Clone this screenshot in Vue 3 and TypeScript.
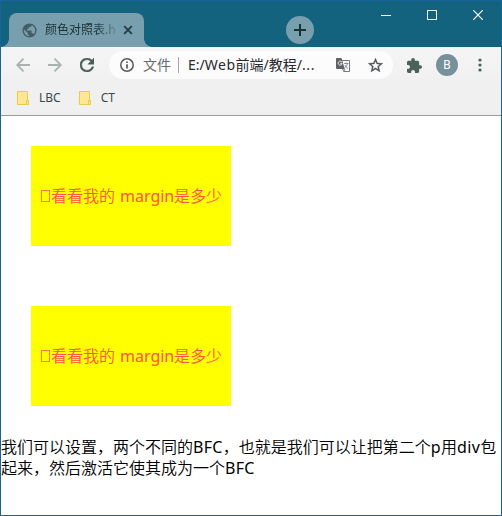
<script setup lang="ts">
interface Bookmark {
  label: string
}

const bookmarks: Bookmark[] = [{ label: 'LBC' }, { label: 'CT' }]
const boxes: number[] = [1, 2]
</script>

<template>
  <div class="window">
    <header class="titlebar">
      <div class="tab">
        <svg class="globe" viewBox="0 0 24 24" width="17" height="17">
          <circle cx="12" cy="12" r="10" fill="#455e64" />
          <path fill="#789fad" d="M4.200 10.500 9.500 15.500v1.500c0 1 .8 1.600 1.500 1.800v1.200C7 19.400 4 16 4 12zM17.900 17.400c-.3-.9-1-1.400-1.900-1.400h-1v-3c0-.6-.4-1-1-1H8.500v-2H10c.6 0 1-.4 1-1V7h2c1.100 0 2-.9 2-2v-.4c2.900 1.200 5 4.100 5 7.400 0 2.100-.8 4-2.100 5.400z" />
        </svg>
        <span class="tab-title">颜色对照表.h</span>
        <svg class="tab-close" viewBox="0 0 10 10" width="10" height="10">
          <path d="M1.200 1.200 8.800 8.800M8.800 1.200 1.200 8.800" stroke="#233f43" stroke-width="1.900" />
        </svg>
      </div>
      <button class="new-tab" aria-label="+">
        <svg viewBox="0 0 12 12" width="12" height="12">
          <path d="M6 0v12M0 6h12" stroke="#18332f" stroke-width="2" />
        </svg>
      </button>
      <div class="controls">
        <svg viewBox="0 0 10 10" width="10" height="10"><path d="M0 5.500h10" stroke="#fff" /></svg>
        <svg viewBox="0 0 10 10" width="10" height="10"><path d="M.5.5h9v9h-9z" fill="none" stroke="#fff" /></svg>
        <svg viewBox="0 0 10 10" width="10" height="10"><path d="M.2.2 9.800 9.800M9.800.2.2 9.800" stroke="#fff" stroke-width="1.200" /></svg>
      </div>
    </header>

    <nav class="toolbar">
      <svg class="back" viewBox="0 0 14 14" width="14" height="14">
        <path d="M14 7H1.500M7.500.7 1.200 7l6.300 6.300" fill="none" stroke="#a9b2b0" stroke-width="1.800" />
      </svg>
      <svg class="forward" viewBox="0 0 14 14" width="14" height="14">
        <path d="M0 7h12.500M6.500.7 12.800 7l-6.300 6.300" fill="none" stroke="#a9b2b0" stroke-width="1.800" />
      </svg>
      <svg class="reload" viewBox="4 4 16 16" width="14" height="14">
        <path fill="#465f58" stroke="#465f58" stroke-width=".5" d="M17.650 6.350C16.200 4.900 14.210 4 12 4c-4.420 0-7.990 3.580-7.990 8s3.570 8 7.990 8c3.730 0 6.840-2.550 7.730-6h-2.080c-.82 2.330-3.040 4-5.650 4-3.310 0-6-2.690-6-6s2.690-6 6-6c1.660 0 3.140.69 4.220 1.780L13 11h7V4l-2.350 2.350z" />
      </svg>
      <div class="omnibox">
        <svg class="info" viewBox="0 0 14 14" width="14" height="14">
          <circle cx="7" cy="7" r="6.200" fill="none" stroke="#57595c" stroke-width="1.500" />
          <path d="M7 6.200v4.300M7 3.400v1.600" stroke="#57595c" stroke-width="1.700" />
        </svg>
        <span class="scheme">文件</span>
        <i class="divider"></i>
        <span class="url">E:/<span class="web">Web</span>前端/教程/<span class="dots">...</span></span>
        <svg class="translate" viewBox="0 0 14 14" width="14" height="14">
          <path d="M6 2.500h7.500v11H7.500" fill="#fafafa" stroke="#77797b" stroke-width="1" />
          <path d="M0 1a1 1 0 0 1 1-1h4.500l3.200 11H1a1 1 0 0 1-1-1z" fill="#5f6163" />
          <path d="M6.200 5.300H4.300M5.900 4A2 2 0 1 0 6.200 5.500" fill="none" stroke="#fff" stroke-width=".9" />
          <path d="M8 5.500h4.500M10.200 4.500v1M11.500 5.500c-.3 2-1.500 3.500-3 4.500M9 7c.5 1.500 1.700 2.600 3 3.500M6.500 11l1.500 2.500 1-2.500z" fill="none" stroke="#77797b" stroke-width=".8" />
        </svg>
        <svg class="star" viewBox="2 2 20 19" width="15" height="14">
          <path fill="#505356" stroke="#505356" stroke-width=".4" d="M22 9.240l-7.190-.62L12 2 9.190 8.630 2 9.240l5.460 4.730L5.820 21 12 17.270 18.180 21l-1.630-7.030L22 9.240zM12 15.400l-3.760 2.270 1-4.280-3.320-2.880 4.380-.38L12 6.100l1.710 4.040 4.380.38-3.320 2.880 1 4.280L12 15.400z" />
        </svg>
      </div>
      <svg class="puzzle" viewBox="2 1 21 21" width="15" height="15">
        <path fill="#4b625b" d="M20.500 11H19V7c0-1.100-.9-2-2-2h-4V3.500C13 2.120 11.880 1 10.500 1S8 2.120 8 3.500V5H4c-1.100 0-1.990.9-1.990 2v3.800H3.500c1.490 0 2.700 1.210 2.700 2.700s-1.210 2.700-2.700 2.700H2V20c0 1.100.9 2 2 2h3.800v-1.500c0-1.490 1.210-2.700 2.700-2.700 1.490 0 2.700 1.210 2.700 2.700V22H17c1.100 0 2-.9 2-2v-4h1.500c1.380 0 2.500-1.120 2.500-2.500S21.880 11 20.500 11z" />
      </svg>
      <span class="avatar">B</span>
      <svg class="menu" viewBox="0 0 4 14" width="4" height="14">
        <circle v-for="y in [2, 7, 12]" :key="y" cx="2" :cy="y" r="1.600" fill="#465f58" />
      </svg>
    </nav>

    <div class="bookmarks">
      <span v-for="item in bookmarks" :key="item.label" class="bookmark">
        <svg viewBox="0 0 13 14" width="13" height="14">
          <path d="M.5.5h10v9h1v4H.5z" fill="#ffe794" stroke="#ebc94e" />
          <path d="M9.500 13.500V9.500h2v4z" fill="#ffe794" stroke="#ebc94e" />
        </svg>
        {{ item.label }}
      </span>
    </div>

    <main class="page">
      <div v-for="box in boxes" :key="box" class="bfc">
        <p class="box"><i class="missing"></i><span>看看我的</span><span class="latin">margin</span><span>是多少</span></p>
      </div>
      <div class="note">
        <div>我们可以设置，两个不同的<span class="caps">BFC</span>，也就是我们可以让把第二个<span class="en">p</span>用<span class="en">div</span>包</div>
        <div>起来，然后激活它使其成为一个<span class="caps">BFC</span></div>
      </div>
    </main>
  </div>
</template>

<style>
body {
  margin: 0;
}
</style>

<style scoped>
.window {
  box-sizing: border-box;
  width: 502px;
  height: 516px;
  border: 1px solid #17639b;
  background: #fff;
  font-family: "Noto Sans", "Noto Sans CJK SC", sans-serif;
  overflow: hidden;
}
svg {
  display: block;
  flex: none;
}
.titlebar {
  display: flex;
  height: 46px;
  background: #13637f;
}
.tab {
  position: relative;
  display: flex;
  align-items: center;
  box-sizing: border-box;
  width: 135px;
  height: 34px;
  margin: 12px 0 0 8px;
  padding: 0 11px 0 12px;
  border-radius: 8px 8px 0 0;
  background: #789fad;
}
.tab::before,
.tab::after {
  content: "";
  position: absolute;
  bottom: 0;
  width: 8px;
  height: 8px;
}
.tab::before {
  right: 100%;
  background: radial-gradient(circle at 0 0, transparent 7.500px, #789fad 8px);
}
.tab::after {
  left: 100%;
  background: radial-gradient(circle at 100% 0, transparent 7.500px, #789fad 8px);
}
.tab-title {
  width: 71px;
  margin-left: 7px;
  overflow: hidden;
  font-size: 12px;
  line-height: 20px;
  white-space: nowrap;
  background: linear-gradient(90deg, #183034 50px, #789fad 76px);
  background-clip: text;
  color: transparent;
}
.tab-close {
  margin-left: auto;
}
.new-tab {
  display: flex;
  align-items: center;
  justify-content: center;
  width: 28px;
  height: 28px;
  margin: 15px 0 0 142px;
  padding: 0;
  border: 0;
  border-radius: 50%;
  background: #789fad;
}
.controls {
  display: flex;
  gap: 36px;
  margin: 9px 0 0 67px;
}
.toolbar {
  display: flex;
  align-items: center;
  height: 36px;
  background: linear-gradient(#f5f5f5, #f0f0f0);
}
.back {
  margin-left: 15px;
}
.forward {
  margin-left: 18px;
}
.reload {
  margin-left: 18px;
}
.omnibox {
  display: flex;
  align-items: center;
  box-sizing: border-box;
  width: 284px;
  height: 28px;
  margin-left: 15px;
  padding-left: 11px;
  border-radius: 14px;
  background: #fcfcfc;
  font-size: 14px;
  line-height: 28px;
  white-space: nowrap;
}
.scheme {
  width: 29px;
  margin-left: 9px;
  color: #686b6e;
}
.divider {
  width: 1px;
  height: 16px;
  margin-left: 6px;
  background: #a5a7a9;
}
.url {
  width: 129px;
  margin-left: 9px;
  color: #28292c;
}
.web {
  letter-spacing: 0.5px;
}
.dots {
  letter-spacing: 0.7px;
}
.translate {
  margin-left: 19px;
}
.star {
  margin-left: 18px;
}
.puzzle {
  margin-left: 14px;
}
.avatar {
  width: 22px;
  height: 22px;
  margin-left: 14px;
  border-radius: 50%;
  background: #78909c;
  color: #fff;
  font: 400 12px/22px Roboto, sans-serif;
  text-align: center;
}
.menu {
  margin-left: 20px;
}
.bookmarks {
  display: flex;
  gap: 18px;
  box-sizing: border-box;
  height: 33px;
  padding-left: 16px;
  border-bottom: 1px solid #9b9b9b;
  background: #f0f0f0;
  color: #344c48;
  font-size: 12px;
  line-height: 29px;
}
.bookmark {
  display: flex;
  align-items: center;
  gap: 9px;
  height: 29px;
}
.page {
  font-size: 16px;
  font-weight: 350;
  line-height: 21px;
}
.bfc {
  display: flow-root;
}
.box {
  display: flex;
  align-items: center;
  box-sizing: border-box;
  width: 200px;
  height: 100px;
  margin: 30px;
  padding-left: 10px;
  background: #ff0;
  color: #ff5545;
  white-space: nowrap;
}
.missing {
  box-sizing: border-box;
  width: 9px;
  height: 12px;
  margin: 0 1px 0 0;
  border: 1px solid #ff7a35;
}
.latin {
  width: 54px;
  margin-left: 5px;
  font-weight: 400;
}
.note {
  padding-top: 1px;
  color: #000;
  white-space: nowrap;
}
.caps,
.en {
  font-weight: 400;
}
.caps {
  letter-spacing: 0.3px;
}
.en {
  letter-spacing: 0.4px;
}
</style>
